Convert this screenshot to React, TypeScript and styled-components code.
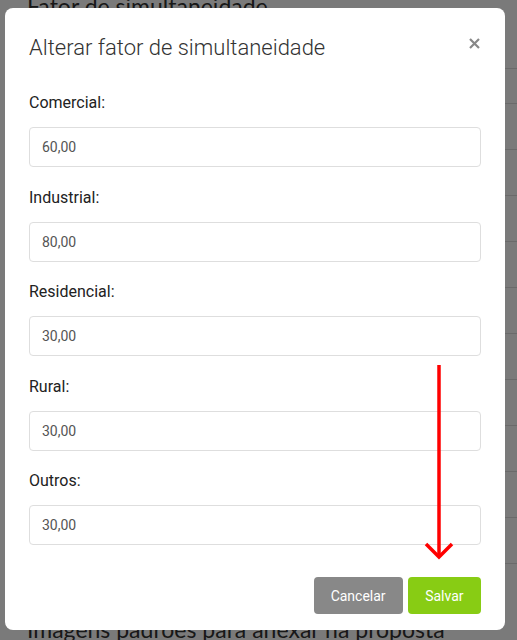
import React from "react";
import styled, { createGlobalStyle } from "styled-components";

const Global = createGlobalStyle`
  html, body { margin: 0; padding: 0; }
  body {
    width: 517px;
    height: 640px;
    overflow: hidden;
    background: #ffffff;
    font-family: Roboto, "Liberation Sans", Arial, sans-serif;
  }
  * { box-sizing: border-box; }
`;

const Page = styled.div`
  position: relative;
  width: 517px;
  height: 640px;
  overflow: hidden;
  padding: 0 0 0 27px;
  display: flex;
  flex-direction: column;
`;

const PageHeading = styled.h2`
  margin: -9px 0 0;
  font-family: Lato, "Open Sans", sans-serif;
  font-weight: 400;
  font-size: 23px;
  line-height: 30px;
  color: #333;
`;

const Table = styled.div`
  display: flex;
  flex-direction: column;
  margin-top: 13px;
`;

const Row = styled.div<{ $h: number }>`
  height: ${(p) => p.$h}px;
  border-bottom: 1px solid #dddddd;
`;

const BottomHeading = styled.h2`
  margin: 0;
  position: absolute;
  left: 27px;
  top: 614px;
  font-family: Lato, "Open Sans", sans-serif;
  font-weight: 400;
  font-size: 23px;
  line-height: 30px;
  color: #333;
  white-space: nowrap;
`;

const Overlay = styled.div`
  position: absolute;
  inset: 0;
  background: rgba(0, 0, 0, 0.52);
  padding: 8px 0 0 5px;
`;

const Modal = styled.div`
  width: 500px;
  background: #fff;
  border-radius: 8px;
  display: flex;
  flex-direction: column;
  padding: 0 24px 16px;
`;

const Header = styled.div`
  display: flex;
  align-items: center;
  justify-content: space-between;
  padding-top: 25px;
`;

const Title = styled.h4`
  margin: 0;
  font-size: 22px;
  line-height: 30px;
  font-weight: 300;
  color: #333;
`;

const Close = styled.button`
  border: 0;
  background: transparent;
  padding: 0;
  width: 14px;
  height: 14px;
  margin-top: -9px;
  display: flex;
  align-items: center;
  justify-content: center;
  cursor: pointer;
`;

const Body = styled.div`
  display: flex;
  flex-direction: column;
  gap: 18.5px;
  margin-top: 28px;
`;

const Field = styled.div`
  display: flex;
  flex-direction: column;
`;

const Label = styled.label`
  font-size: 16px;
  line-height: 24px;
  color: #222;
  margin-bottom: 12px;
`;

const Input = styled.input`
  height: 40px;
  width: 100%;
  border: 1px solid #dedede;
  border-radius: 4px;
  padding: 0 12px;
  font-family: Roboto, "Liberation Sans", Arial, sans-serif;
  font-size: 14px;
  color: #555;
  background: #fff;
  outline: none;
`;

const Footer = styled.div`
  display: flex;
  justify-content: flex-end;
  gap: 5px;
  margin-top: 32px;
`;

const Button = styled.button<{ $variant: "muted" | "primary" }>`
  height: 37px;
  border: 0;
  border-radius: 4px;
  padding: 0 ${(p) => (p.$variant === "muted" ? "17px" : "17.5px")};
  font-family: Roboto, "Liberation Sans", Arial, sans-serif;
  font-size: 14px;
  color: #fff;
  background: ${(p) => (p.$variant === "muted" ? "#888888" : "#88cc14")};
  cursor: pointer;
`;

const Arrow = styled.svg`
  position: absolute;
  left: 423px;
  top: 362px;
`;

const fields = [
  { label: "Comercial:", value: "60,00" },
  { label: "Industrial:", value: "80,00" },
  { label: "Residencial:", value: "30,00" },
  { label: "Rural:", value: "30,00" },
  { label: "Outros:", value: "30,00" },
];

const rowHeights = [35, 35, 46, 46, 46, 46, 46, 46, 46, 46, 46, 46];

export default function App() {
  return (
    <>
      <Global />
      <Page>
        <PageHeading>Fator de simultaneidade</PageHeading>
        <Table>
          {rowHeights.map((h, i) => (
            <Row key={i} $h={h} />
          ))}
        </Table>
        <BottomHeading>Imagens padroes para anexar na proposta</BottomHeading>
        <Overlay>
          <Modal>
            <Header>
              <Title>Alterar fator de simultaneidade</Title>
              <Close aria-label="Fechar">
                <svg width="11" height="11" viewBox="0 0 11 11">
                  <path d="M1 1 L10 10 M10 1 L1 10" stroke="#888" strokeWidth="2.2" strokeLinecap="butt" />
                </svg>
              </Close>
            </Header>
            <Body>
              {fields.map((f) => (
                <Field key={f.label}>
                  <Label>{f.label}</Label>
                  <Input defaultValue={f.value} />
                </Field>
              ))}
            </Body>
            <Footer>
              <Button $variant="muted">Cancelar</Button>
              <Button $variant="primary">Salvar</Button>
            </Footer>
          </Modal>
        </Overlay>
        <Arrow width="32" height="200" viewBox="0 0 32 200">
          <path d="M16 3 L16 194" stroke="#ff0000" strokeWidth="3.5" />
          <path d="M3 182 L16 195 L29 182" stroke="#ff0000" strokeWidth="3.5" fill="none" />
        </Arrow>
      </Page>
    </>
  );
}
